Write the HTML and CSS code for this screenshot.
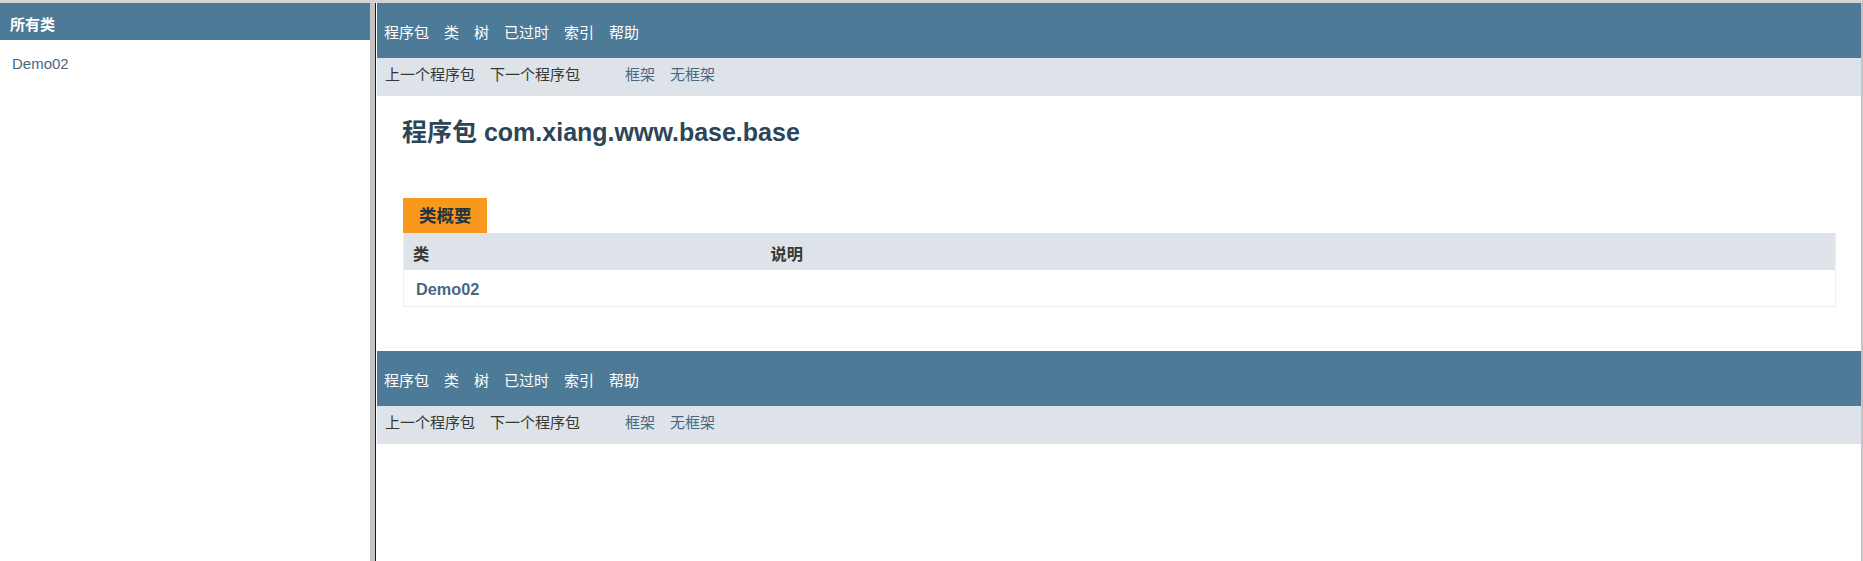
FILE: index.html
```html
<!DOCTYPE html>
<html lang="zh">
<head>
  <meta charset="UTF-8">
  <title>com.xiang.www.base.base</title>
  <link rel="stylesheet" href="styles.css">
</head>
<body>
  <div class="frames">
    <!-- left frame: all classes -->
    <div class="class-frame">
      <div class="frame-bar">所有类</div>
      <ul class="class-list">
        <li><a href="#">Demo02</a></li>
      </ul>
    </div>

    <div class="divider"></div>

    <!-- right frame: package summary -->
    <div class="package-frame">
      <div class="top-nav">
        <ul class="nav-list">
          <li>程序包</li>
          <li>类</li>
          <li>树</li>
          <li>已过时</li>
          <li>索引</li>
          <li>帮助</li>
        </ul>
      </div>
      <div class="sub-nav">
        <ul class="nav-list">
          <li>上一个程序包</li>
          <li>下一个程序包</li>
        </ul>
        <ul class="nav-list frame-links">
          <li><a href="#">框架</a></li>
          <li><a href="#">无框架</a></li>
        </ul>
      </div>

      <div class="header">
        <h1 class="title">程序包 com.xiang.www.base.base</h1>
      </div>

      <div class="content">
        <div class="caption"><span>类概要</span></div>
        <table class="summary">
          <tr>
            <th class="col-first">类</th>
            <th class="col-last">说明</th>
          </tr>
          <tr>
            <td class="col-first"><a href="#">Demo02</a></td>
            <td class="col-last"></td>
          </tr>
        </table>
      </div>

      <div class="top-nav">
        <ul class="nav-list">
          <li>程序包</li>
          <li>类</li>
          <li>树</li>
          <li>已过时</li>
          <li>索引</li>
          <li>帮助</li>
        </ul>
      </div>
      <div class="sub-nav">
        <ul class="nav-list">
          <li>上一个程序包</li>
          <li>下一个程序包</li>
        </ul>
        <ul class="nav-list frame-links">
          <li><a href="#">框架</a></li>
          <li><a href="#">无框架</a></li>
        </ul>
      </div>
    </div>
  </div>
</body>
</html>
```

FILE: styles.css
```css
html, body {
  height: 100%;
}
body {
  margin: 0;
  font-family: "Liberation Sans", Arial, "Noto Sans CJK SC", sans-serif;
  font-size: 15px;
  color: #353833;
  background-color: #fff;
}
a {
  text-decoration: none;
  color: #4A6782;
}
ul {
  list-style: none;
  margin: 0;
  padding: 0;
}

.frames {
  display: flex;
  height: 100%;
  box-sizing: border-box;
  border-top: 3px solid #d4d4d4;
  border-right: 2px solid #c4c4c4;
}

/* left frame */
.class-frame {
  width: 370px;
  flex-shrink: 0;
}
.frame-bar {
  height: 37px;
  box-sizing: border-box;
  padding: 13px 0 0 10px;
  line-height: 18px;
  background-color: #4D7A97;
  color: #fff;
  font-weight: bold;
}
.class-list li {
  padding: 15px 0 0 12px;
  line-height: 18px;
}

.divider {
  width: 5px;
  flex-shrink: 0;
  background-color: #c4c4c4;
  border-right: 1px solid #1a1a1a;
}

/* right frame */
.package-frame {
  flex: 1;
  min-width: 0;
  padding-left: 1px;
}
.top-nav {
  height: 55px;
  box-sizing: border-box;
  padding: 21px 0 0 7px;
  background-color: #4D7A97;
  color: #fff;
}
.sub-nav {
  height: 38px;
  box-sizing: border-box;
  padding: 8px 0 0 8px;
  background-color: #dee3e9;
  display: flex;
}
.nav-list {
  display: flex;
  line-height: 18px;
}
.nav-list li {
  margin-right: 15px;
}
.sub-nav .frame-links {
  margin-left: 30px;
}

.header {
  padding: 21px 0 0 25px;
}
.title {
  margin: 0;
  font-size: 25px;
  line-height: 30px;
  color: #2c4557;
}

.content {
  padding: 51px 25px 44px 26px;
}
.caption {
  display: flex;
}
.caption span {
  height: 35px;
  line-height: 37px;
  padding: 0 15px 0 16px;
  background-color: #F8981D;
  color: #253441;
  font-weight: bold;
  font-size: 17.5px;
}
.summary {
  width: 100%;
  border-collapse: collapse;
  border: 1px solid #eee;
  border-top: none;
}
.summary th {
  height: 34px;
  padding: 3px 0 0 9px;
  background-color: #dee3e9;
  text-align: left;
  font-size: 16.25px;
  font-weight: bold;
  color: #353833;
}
.summary th.col-first {
  width: 25%;
}
.summary td {
  height: 33px;
  padding: 3px 0 0 12px;
}
.summary td a {
  font-weight: bold;
  font-size: 16.25px;
}
```
